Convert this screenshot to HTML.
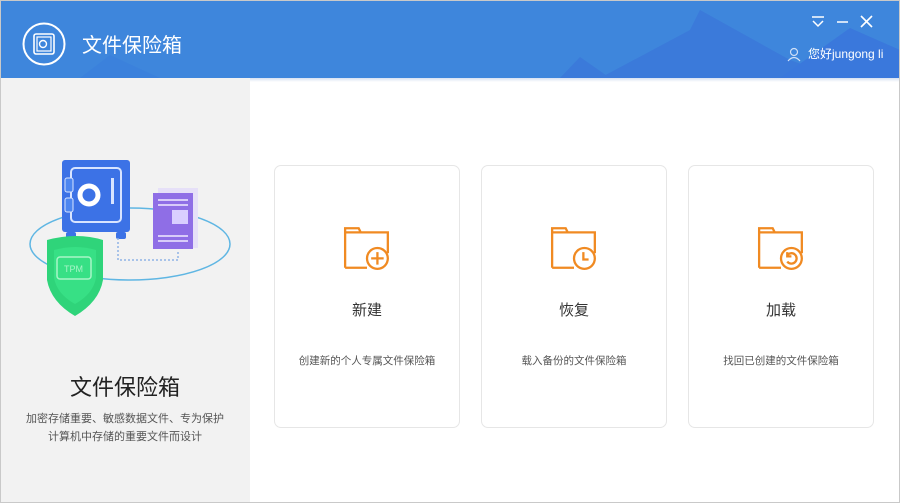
<!DOCTYPE html>
<html><head><meta charset="utf-8"><style>
*{margin:0;padding:0;box-sizing:border-box}
body{width:900px;height:503px;overflow:hidden;background:#fff;font-family:"Liberation Sans","Noto Sans CJK SC",sans-serif;position:relative}
.hdr{position:absolute;left:0;top:0;width:900px;height:78px;background:#3e86dc;overflow:hidden}
.left{position:absolute;left:0;top:78px;width:250px;height:425px;background:#f2f2f2}
.card{position:absolute;top:165px;width:186px;height:263px;border:1px solid #e6e6e6;border-radius:7px;background:#fff}
.card .t{position:absolute;top:133px;width:100%;text-align:center;font-size:15px;color:#333}
.card .d{position:absolute;top:187px;width:100%;text-align:center;font-size:10.5px;color:#555}
.card svg{position:absolute;left:67px;top:57px}
</style></head><body>
<div class="hdr">
<svg width="900" height="78" style="position:absolute;left:0;top:0">
<polygon points="80,78 110,55 160,78" fill="#3b7fdc" opacity=".6"/>
<polygon points="560,78 580,57 610,78" fill="#3b7ada"/>
<polygon points="600,78 690,30 700,10 790,60 840,78" fill="#3b7ada"/>
<polygon points="780,78 850,28 900,50 900,78" fill="#3a78dc"/>
<circle cx="44" cy="44" r="20.5" fill="none" stroke="#fff" stroke-width="2"/>
<rect x="34" y="34" width="20" height="20" rx="2" fill="none" stroke="#fff" stroke-width="1.6"/>
<rect x="37" y="37" width="14" height="14" fill="none" stroke="#fff" stroke-width="1.2"/>
<circle cx="43" cy="44" r="3.5" fill="none" stroke="#fff" stroke-width="1.4"/>
<path d="M812 17h12M813 21l5 5 5-5" stroke="#fff" stroke-width="1.5" fill="none"/>
<path d="M837 22h11" stroke="#fff" stroke-width="1.5"/>
<path d="M861 16l11 11M872 16l-11 11" stroke="#fff" stroke-width="1.6"/>
<circle cx="794" cy="52" r="3.5" fill="none" stroke="#cfe0f7" stroke-width="1.2"/>
<path d="M788 61q6-7 12 0" fill="none" stroke="#cfe0f7" stroke-width="1.2"/>
</svg>
<div style="position:absolute;left:82px;top:29px;font-size:20px;color:#fff">文件保险箱</div>
<div style="position:absolute;left:808px;top:45px;font-size:12px;color:#fff">您好jungong li</div>
</div>
<div style="position:absolute;left:0;top:78px;width:900px;height:4px;background:linear-gradient(#d6e1f2,#fff0)"></div>
<div class="left">
<svg width="250" height="250" style="position:absolute;left:0;top:0">
<ellipse cx="130" cy="166" rx="100" ry="36" fill="none" stroke="#5fb6e3" stroke-width="1.5"/>
<rect x="62" y="82" width="68" height="72" rx="3" fill="#3c72e6"/>
<rect x="71" y="90" width="50" height="54" rx="4" fill="none" stroke="#d8e4ff" stroke-width="2"/>
<rect x="65" y="100" width="8" height="14" rx="2" fill="#4d86f0" stroke="#d8e4ff"/>
<rect x="65" y="120" width="8" height="14" rx="2" fill="#4d86f0" stroke="#d8e4ff"/>
<circle cx="89" cy="117" r="9" fill="none" stroke="#fff" stroke-width="5"/>
<rect x="111" y="100" width="3" height="26" fill="#d8e4ff"/>
<rect x="66" y="154" width="10" height="7" rx="2" fill="#3c72e6"/><rect x="116" y="154" width="10" height="7" rx="2" fill="#3c72e6"/>
<path d="M118 160v22h60v-8" stroke="#8fb3e6" stroke-width="1.5" stroke-dasharray="2 2" fill="none"/>
<rect x="158" y="110" width="40" height="60" fill="#e6e0f8"/>
<rect x="153" y="115" width="40" height="56" fill="#8f6ee6"/>
<path d="M158 122h30M158 127h30M158 158h30M158 163h30" stroke="#f0eaff" stroke-width="1.6"/>
<rect x="172" y="132" width="16" height="14" fill="#d9cfff"/>
<g transform="translate(2,-6)">
<path d="M45 168q30-8 56 0v40q-4 22-28 36q-24-14-28-36z" fill="#2fd47a"/>
<path d="M52 178q22-6 42 0v28q-3 16-21 26q-18-10-21-26z" fill="#3ee88c" opacity=".6"/>
<rect x="55" y="185" width="34" height="22" rx="3" fill="none" stroke="#a8f5c8" stroke-width="1.5"/>
<text x="62" y="200" font-size="9" fill="#a8f5c8" font-family="Liberation Sans">TPM</text>
</g>
</svg>
<div style="position:absolute;left:0;top:292px;width:250px;text-align:center;font-size:22px;color:#222">文件保险箱</div>
<div style="position:absolute;left:0;top:332px;width:250px;text-align:center;font-size:11px;color:#555;line-height:18px">加密存储重要、敏感数据文件、专为保护<br>计算机中存储的重要文件而设计</div>
</div>
<div class="card" style="left:274px">
<svg width="50" height="50" viewBox="0 0 48 48"><g fill="none" stroke="#f08a22" stroke-width="2.2"><path d="M3 43V5h13l2 4h26v20M3 9h15M3 43h21"/><circle cx="34" cy="34" r="10" fill="#fff"/><path d="M34 28v12M28 34h12"/></g></svg>
<div class="t">新建</div><div class="d">创建新的个人专属文件保险箱</div></div>
<div class="card" style="left:481px">
<svg width="50" height="50" viewBox="0 0 48 48"><g fill="none" stroke="#f08a22" stroke-width="2.2"><path d="M3 43V5h13l2 4h26v20M3 9h15M3 43h21"/><circle cx="34" cy="34" r="10" fill="#fff"/><path d="M33 28v7h5"/></g></svg>
<div class="t">恢复</div><div class="d">载入备份的文件保险箱</div></div>
<div class="card" style="left:688px">
<svg width="50" height="50" viewBox="0 0 48 48"><g fill="none" stroke="#f08a22" stroke-width="2.2"><path d="M3 43V5h13l2 4h26v20M3 9h15M3 43h21"/><circle cx="34" cy="34" r="10" fill="#fff"/><path d="M30 31a5 5 0 1 1 0 6M30 28v4h4"/></g></svg>
<div class="t">加载</div><div class="d">找回已创建的文件保险箱</div></div>
<div style="position:absolute;left:0;top:0;width:900px;height:503px;border:1px solid #c9c9c9;pointer-events:none"></div>
</body></html>
